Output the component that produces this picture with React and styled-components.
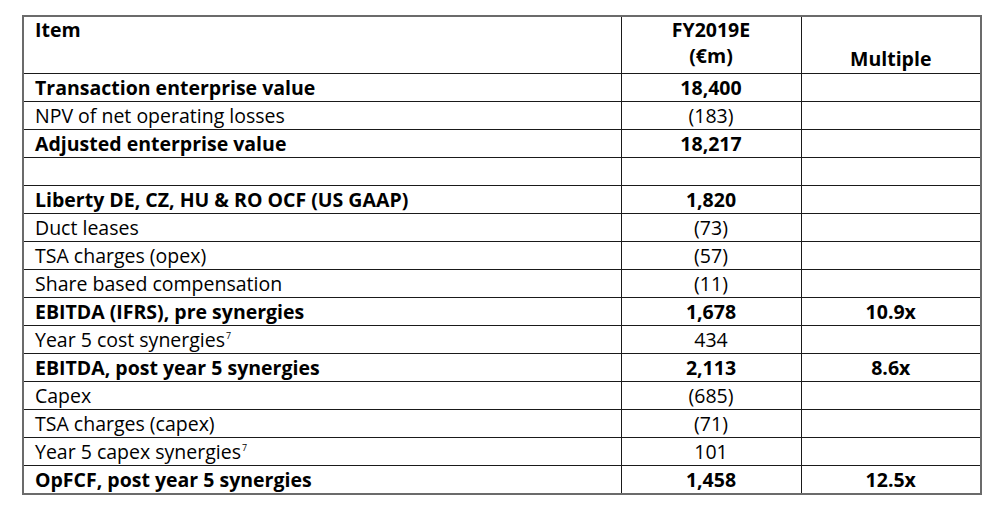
import React from "react";
import styled, { createGlobalStyle } from "styled-components";

const Global = createGlobalStyle`
  html, body { margin: 0; padding: 0; background: #fff; }
  body { font-family: "Open Sans", "Liberation Sans", sans-serif; color: #000; }
`;

const Page = styled.div`
  padding: 15px 0 0 22px;
`;

const Table = styled.table`
  width: 958px;
  border-collapse: collapse;
  border: 2px solid #6b6b6b;
  table-layout: fixed;
  font-size: 19.5px;
`;

const HeadCell = styled.th`
  border: 1px solid #1a1a1a;
  height: 55px;
  padding: 0 11px 1px;
  line-height: 26px;
  font-weight: 700;
  text-align: ${(p) => (p.$center ? "center" : "left")};
  vertical-align: ${(p) => p.$valign || "top"};
`;

const Cell = styled.td`
  border: 1px solid #1a1a1a;
  height: 27px;
  padding: 0 11px;
  line-height: 26px;
  font-weight: ${(p) => (p.$bold ? 700 : 400)};
  text-align: ${(p) => (p.$center ? "center" : "left")};
  white-space: nowrap;
`;

const Sup = styled.sup`
  font-size: 9px;
  line-height: 0;
  vertical-align: 8px;
  margin-left: 1px;
`;

const rows = [
  { item: "Transaction enterprise value", value: "18,400", bold: true },
  { item: "NPV of net operating losses", value: "(183)" },
  { item: "Adjusted enterprise value", value: "18,217", bold: true },
  { item: "", value: "" },
  { item: "Liberty DE, CZ, HU & RO OCF (US GAAP)", value: "1,820", bold: true },
  { item: "Duct leases", value: "(73)" },
  { item: "TSA charges (opex)", value: "(57)" },
  { item: "Share based compensation", value: "(11)" },
  { item: "EBITDA (IFRS), pre synergies", value: "1,678", multiple: "10.9x", bold: true },
  { item: "Year 5 cost synergies", sup: "7", value: "434" },
  { item: "EBITDA, post year 5 synergies", value: "2,113", multiple: "8.6x", bold: true },
  { item: "Capex", value: "(685)" },
  { item: "TSA charges (capex)", value: "(71)" },
  { item: "Year 5 capex synergies", sup: "7", value: "101" },
  { item: "OpFCF, post year 5 synergies", value: "1,458", multiple: "12.5x", bold: true },
];

export default function App() {
  return (
    <>
      <Global />
      <Page>
        <Table>
          <colgroup>
            <col style={{ width: 598 }} />
            <col style={{ width: 180 }} />
            <col style={{ width: 180 }} />
          </colgroup>
          <thead>
            <tr>
              <HeadCell>Item</HeadCell>
              <HeadCell $center>
                FY2019E
                <br />
                (€m)
              </HeadCell>
              <HeadCell $center $valign="bottom">
                Multiple
              </HeadCell>
            </tr>
          </thead>
          <tbody>
            {rows.map((r, i) => (
              <tr key={i}>
                <Cell $bold={r.bold}>
                  {r.item}
                  {r.sup && <Sup>{r.sup}</Sup>}
                </Cell>
                <Cell $bold={r.bold} $center>
                  {r.value}
                </Cell>
                <Cell $bold={r.bold} $center>
                  {r.multiple || ""}
                </Cell>
              </tr>
            ))}
          </tbody>
        </Table>
      </Page>
    </>
  );
}
